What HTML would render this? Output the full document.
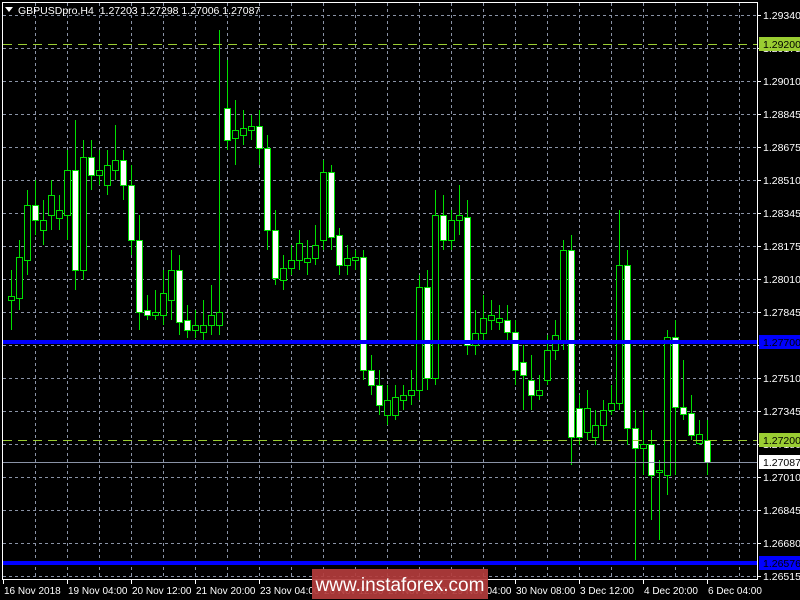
<!DOCTYPE html>
<html><head><meta charset="utf-8"><style>
body{margin:0;background:#000;width:800px;height:600px;overflow:hidden;font-family:"Liberation Sans",sans-serif}
svg{position:absolute;left:0;top:0}
</style></head><body>
<svg id="s" width="800" height="600" xmlns="http://www.w3.org/2000/svg" font-family="Liberation Sans, sans-serif" font-size="10.5">
<rect width="800" height="600" fill="#000"/>
<g id="grid" stroke="#8a93a6" stroke-width="1" stroke-dasharray="3,3"></g>
<g id="c"></g>
<line x1="3" y1="44.5" x2="757" y2="44.5" stroke="#9acd32" stroke-dasharray="9,6"/>
<line x1="3" y1="440.5" x2="757" y2="440.5" stroke="#9acd32" stroke-dasharray="9,6"/>
<line x1="3" y1="462.5" x2="757" y2="462.5" stroke="#8a93a6"/>
<rect x="3" y="340" width="754" height="4" fill="#0000ff"/>
<rect x="3" y="561" width="754" height="4" fill="#0000ff"/>
<rect x="2.5" y="2.5" width="755" height="577" fill="none" stroke="#fff"/>
<g id="ax" fill="#fff"></g>
<rect x="759" y="37" width="41" height="14" fill="#9acd32"/><text x="763" y="48" fill="#000">1.29200</text>
<rect x="759" y="335" width="41" height="14" fill="#0000ff"/><text x="763" y="346" fill="#000">1.27700</text>
<rect x="759" y="433" width="41" height="14" fill="#9acd32"/><text x="763" y="444" fill="#000">1.27200</text>
<rect x="759" y="455" width="41" height="14" fill="#fff"/><text x="763" y="466" fill="#000">1.27087</text>
<rect x="759" y="556" width="41" height="14" fill="#0000ff"/><text x="763" y="567" fill="#000">1.26576</text>
<path d="M5 7h8l-4 5z" fill="#fff"/>
<text x="18" y="14" fill="#fff" font-size="10.5">GBPUSDpro,H4&#160;&#160;1.27203 1.27298 1.27006 1.27087</text>
<rect x="312" y="569" width="176" height="30" fill="#b33c3c" opacity="0.92"/>
<text x="400" y="591" fill="#fff" font-size="19" text-anchor="middle">www.instaforex.com</text>
</svg>
<script>
var g=document.getElementById('grid'),h='';
for(var x=35;x<757;x+=32)h+='<line x1="'+(x+.5)+'" y1="3" x2="'+(x+.5)+'" y2="579"/>';
var prices=['1.29340','1.29175','1.29010','1.28845','1.28675','1.28510','1.28345','1.28175','1.28010','1.27845','1.27680','1.27510','1.27345','1.27180','1.27010','1.26845','1.26680','1.26515'];
var a='';
for(var i=0;i<18;i++){var y=15+33*i;h+='<line x1="3" y1="'+(y+.5)+'" x2="757" y2="'+(y+.5)+'"/>';a+='<line x1="757" y1="'+(y+.5)+'" x2="761" y2="'+(y+.5)+'" stroke="#fff"/><text x="763" y="'+(y+4)+'">'+prices[i]+'</text>';}
g.innerHTML=h;
var dl=[['16 Nov 2018',3],['19 Nov 04:00',67],['20 Nov 12:00',131],['21 Nov 20:00',195],['23 Nov 04:00',259],['26 Nov 12:00',323],['27 Nov 20:00',387],['29 Nov 04:00',451],['30 Nov 08:00',515],['3 Dec 12:00',579],['4 Dec 20:00',643],['6 Dec 04:00',707]];
dl.forEach(function(d){a+='<line x1="'+(d[1]+.5)+'" y1="580" x2="'+(d[1]+.5)+'" y2="584" stroke="#fff"/><text x="'+(d[1]+1)+'" y="594" font-size="10">'+d[0]+'</text>';});
document.getElementById('ax').innerHTML=a;
var C=[[296,300,0,270,330],[257,298,0,240,310],[205,260,0,190,275],[205,220,1,180,235],[220,230,0,200,245],[195,215,0,180,230],[210,218,0,195,230],[170,215,0,150,240],[170,270,1,120,290],[157,270,0,140,280],[157,175,1,140,190],[170,175,0,150,185],[165,185,0,150,195],[160,170,0,125,180],[160,185,1,150,200],[185,240,1,165,255],[240,312,1,215,330],[310,315,1,295,320],[312,315,0,290,320],[293,315,0,270,325],[270,300,0,250,320],[270,322,1,255,335],[320,330,1,305,338],[325,330,0,310,338],[325,332,0,300,340],[315,325,0,285,335],[312,325,0,30,335],[108,140,1,60,150],[130,138,0,100,165],[128,135,0,110,145],[126,130,0,115,140],[126,148,1,110,165],[148,230,1,135,250],[230,278,1,210,285],[268,280,0,255,290],[260,268,0,245,275],[243,260,0,230,270],[258,262,0,240,275],[245,258,0,225,265],[172,240,0,160,250],[172,237,1,165,250],[235,265,1,228,275],[258,265,0,245,275],[257,260,0,250,270],[257,370,1,250,380],[370,385,1,355,395],[385,405,1,370,415],[400,415,0,385,425],[397,415,0,385,420],[395,400,0,385,410],[390,395,0,370,405],[287,390,0,275,400],[287,378,1,270,390],[215,378,0,190,385],[215,240,1,195,250],[220,240,0,210,250],[215,220,0,185,235],[217,345,1,200,355],[333,345,0,310,355],[318,333,0,295,340],[315,320,0,300,330],[318,322,0,305,330],[320,332,1,305,340],[332,370,1,320,385],[362,375,1,345,410],[380,395,1,355,410],[390,395,0,375,400],[350,380,0,335,385],[335,350,0,320,360],[250,340,0,240,350],[250,437,1,235,465],[408,437,1,395,445],[408,432,0,390,440],[425,437,0,410,445],[410,425,0,400,440],[403,410,0,385,415],[265,403,0,210,410],[265,428,1,250,445],[428,448,1,410,560],[444,448,0,410,475],[444,475,1,430,520],[470,472,0,460,540],[337,475,0,330,495],[337,407,1,320,475],[407,414,1,360,420],[413,435,1,395,440],[434,443,0,420,445],[440,462,1,420,475]];
var o='';
C.forEach(function(c,i){var x=11+8*i;
o+='<line x1="'+(x+.5)+'" y1="'+c[3]+'" x2="'+(x+.5)+'" y2="'+c[4]+'" stroke="#00e000"/>';
var hgt=Math.max(c[1]-c[0],2);
o+='<rect x="'+(x-2.5)+'" y="'+(c[0]+.5)+'" width="6" height="'+hgt+'" fill="'+(c[2]?'#fff':'#000')+'" stroke="#00e000"/>';});
document.getElementById('c').innerHTML=o;
</script>
</body></html>
